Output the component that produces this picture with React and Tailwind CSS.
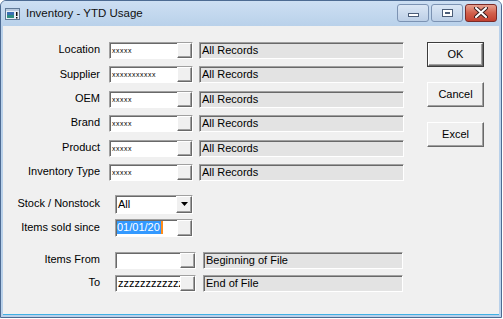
import React from 'react';

// Classic Win32 3D edges
const sunken =
  'border border-t-[#a0a0a0] border-l-[#a0a0a0] border-r-white border-b-white shadow-[inset_1px_1px_0_#696969]';
const raised =
  'border border-t-white border-l-white border-r-[#696969] border-b-[#696969] shadow-[inset_-1px_-1px_0_#a0a0a0] bg-[#f0f0f0]';

const LookupField = ({ value, wide }) => (
  <div className={`${wide ? 'w-[81px]' : 'w-[84px]'} h-[17px] flex bg-white ${sunken}`}>
    <div className="flex-1 min-w-0 overflow-hidden whitespace-nowrap pl-[2px] leading-[15px]">
      {value}
    </div>
    <div className={`w-[15px] h-full shrink-0 ${raised}`} />
  </div>
);

const Stars = ({ n }) => (
  <span className="text-[7px] tracking-[0.5px] relative top-[-1px]">{'x'.repeat(n)}</span>
);

const ReadBox = ({ text, wide }) => (
  <div
    className={`${wide ? 'w-[205px]' : 'w-[200px]'} h-[17px] bg-[#e3e3e3] pl-[2px] leading-[15px] ${sunken}`}
  >
    {text}
  </div>
);

const Label = ({ children }) => (
  <div className="w-[97px] shrink-0 text-right pb-[2px]">{children}</div>
);

const TitleIcon = () => (
  <svg width="15" height="12" viewBox="0 0 15 12">
    <rect x="0.5" y="0.5" width="14" height="11" fill="#e8eef5" stroke="#5f7896" />
    <rect x="1" y="1" width="13" height="2" fill="#b8c9de" />
    <rect x="2" y="4" width="7" height="6" fill="#2f8c80" />
    <rect x="2" y="4" width="7" height="3" fill="#3b6fb3" />
    <rect x="11" y="4" width="1.5" height="4" fill="#111" />
    <rect x="11" y="9" width="1.5" height="1.5" fill="#111" />
  </svg>
);

const CaptionButton = ({ kind }) => {
  if (kind === 'close') {
    return (
      <div className="w-[32px] h-[18px] rounded-[3px] border border-[#7a2b28] bg-gradient-to-b from-[#e6a08f] via-[#d2604c] to-[#c24030] flex items-center justify-center">
        <svg width="14" height="11" viewBox="0 0 14 11">
          <path d="M2 1 L12 10 M12 1 L2 10" stroke="#3b2020" strokeWidth="4" strokeLinecap="round" />
          <path d="M2 1 L12 10 M12 1 L2 10" stroke="#fff" strokeWidth="2" strokeLinecap="round" />
        </svg>
      </div>
    );
  }
  return (
    <div className="w-[32px] h-[18px] rounded-[3px] border border-[#7c93b3] bg-gradient-to-b from-[#dbe7f5] to-[#bccfe6] flex items-center justify-center">
      {kind === 'min' ? (
        <div className="w-[11px] h-[4px] mt-[4px] bg-white border border-[#4b5d78]" />
      ) : (
        <div className="w-[11px] h-[8px] border border-[#4b5d78] bg-white flex items-center justify-center">
          <div className="w-[5px] h-[2px] border border-[#4b5d78]" />
        </div>
      )}
    </div>
  );
};

const PushButton = ({ children, isDefault }) => (
  <div
    className={`w-[57px] h-[25px] flex items-center justify-center ${
      isDefault ? 'border border-[#3c3c3c]' : ''
    }`}
  >
    <div className={`w-full h-full flex items-center justify-center ${raised}`}>{children}</div>
  </div>
);

const rows = [
  ['Location', 5],
  ['Supplier', 11],
  ['OEM', 5],
  ['Brand', 5],
  ['Product', 5],
  ['Inventory Type', 5],
];

export default function App() {
  return (
    <div className="w-[503px] h-[319px] bg-white font-['Liberation_Sans',Arial,sans-serif] text-[11px] text-black">
      <div className="w-[502px] h-[318px] flex flex-col rounded-t-[6px] border border-[#4d6b93] bg-[#b9d1ea] overflow-hidden">
        {/* Title bar */}
        <div className="h-[25px] shrink-0 flex items-center pl-[4px] pr-[4px] bg-gradient-to-b from-[#cddff3] to-[#b9d1ea]">
          <TitleIcon />
          <span className="ml-[6px] text-[11.5px] text-[#111]">Inventory - YTD Usage</span>
          <div className="flex-1" />
          <div className="flex gap-[2px] mb-[2px]">
            <CaptionButton kind="min" />
            <CaptionButton kind="max" />
            <CaptionButton kind="close" />
          </div>
        </div>

        {/* Client area */}
        <div className="flex-1 mx-[2px] mb-[2px] bg-[#f0f0f0] flex pt-[16px] border-b border-[#3fb0e4]">
          <div className="flex flex-col">
            <div className="flex flex-col gap-y-[7.4px]">
              {rows.map(([label, n]) => (
                <div key={label} className="flex items-center h-[17px]">
                  <Label>{label}</Label>
                  <div className="ml-[9px]">
                    <LookupField value={<Stars n={n} />} />
                  </div>
                  <div className="ml-[6px]">
                    <ReadBox text="All Records" wide />
                  </div>
                </div>
              ))}
            </div>

            {/* Stock / Nonstock */}
            <div className="flex items-center h-[19px] mt-[14px]">
              <Label>Stock / Nonstock</Label>
              <div className={`ml-[15px] w-[78px] h-full flex bg-white ${sunken}`}>
                <div className="flex-1 pl-[2px] leading-[17px]">All</div>
                <div className={`w-[16px] h-full flex items-center justify-center ${raised}`}>
                  <svg width="7" height="4" viewBox="0 0 7 4">
                    <path d="M0 0 H7 L3.5 4 Z" fill="#000" />
                  </svg>
                </div>
              </div>
            </div>

            {/* Items sold since */}
            <div className="flex items-center h-[18px] mt-[5px]">
              <Label>Items sold since</Label>
              <div className={`ml-[15px] w-[78px] h-full flex bg-white ${sunken}`}>
                <div className="flex-1 flex items-center pl-[1px]">
                  <span className="bg-[#3399ff] text-white leading-[13px] pr-[1px]">01/01/20</span>
                  <span className="w-[2px] h-[13px] bg-[#ff8c1a]" />
                </div>
                <div className={`w-[15px] h-full ${raised}`} />
              </div>
            </div>

            {/* Items From */}
            <div className="flex items-center h-[17px] mt-[15px]">
              <Label>Items From</Label>
              <div className="ml-[15px]">
                <LookupField value="" wide />
              </div>
              <div className="ml-[7px]">
                <ReadBox text="Beginning of File" />
              </div>
            </div>

            {/* To */}
            <div className="flex items-center h-[17px] mt-[6px]">
              <Label>To</Label>
              <div className="ml-[15px]">
                <LookupField value="zzzzzzzzzzzzz" wide />
              </div>
              <div className="ml-[7px]">
                <ReadBox text="End of File" />
              </div>
            </div>
          </div>

          {/* Buttons */}
          <div className="ml-[23px] flex flex-col gap-[15px]">
            <PushButton isDefault>OK</PushButton>
            <PushButton>Cancel</PushButton>
            <PushButton>Excel</PushButton>
          </div>
        </div>
      </div>
    </div>
  );
}
